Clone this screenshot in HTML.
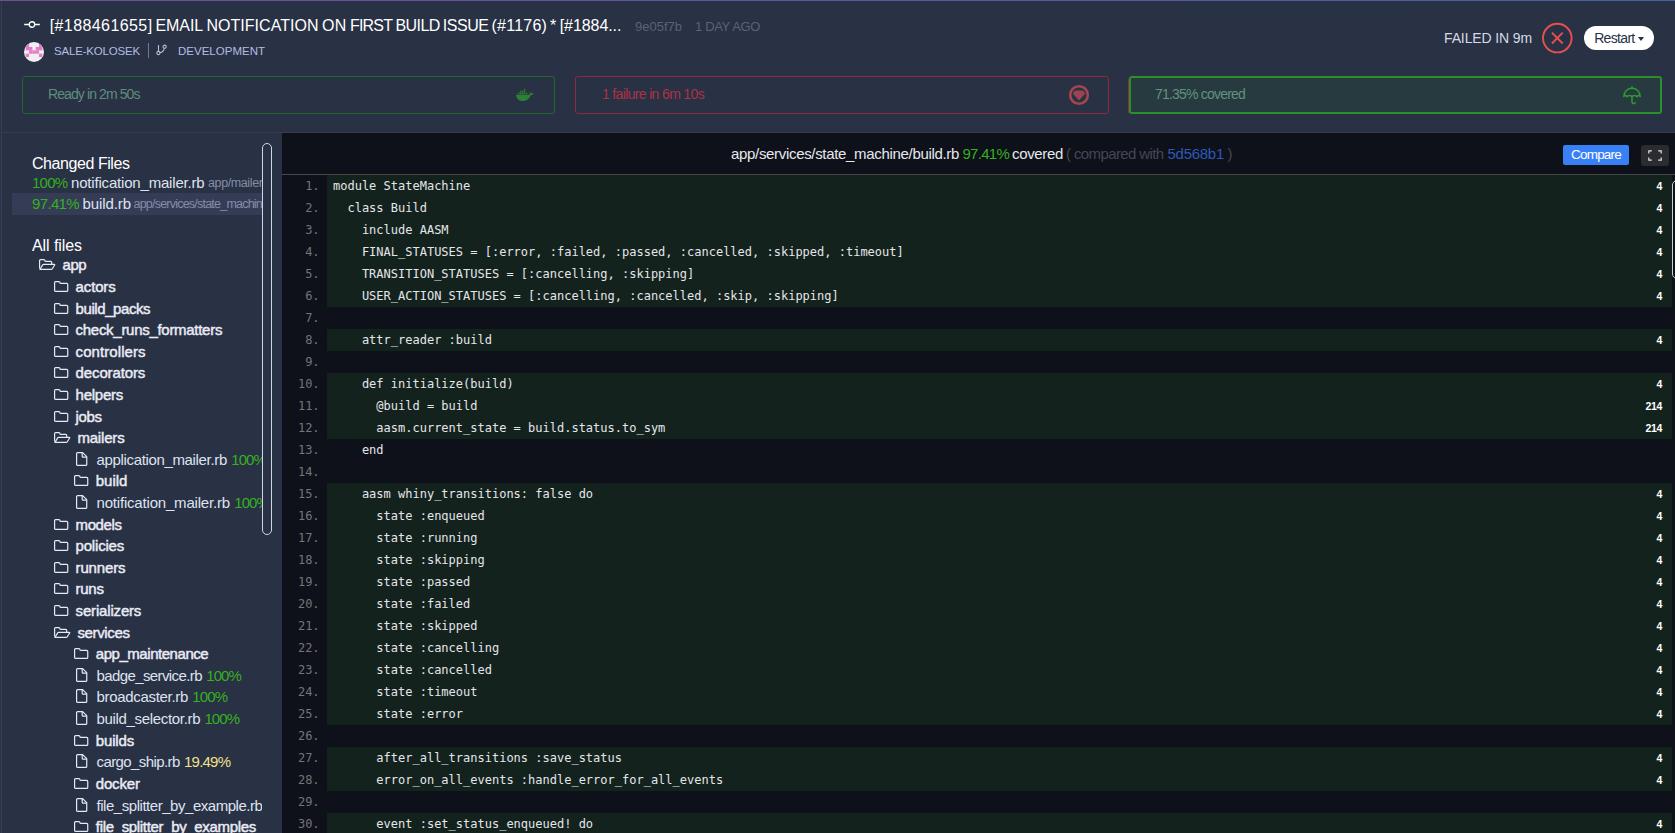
<!DOCTYPE html>
<html lang="en"><head><meta charset="utf-8"><title>Build coverage</title>
<style>
*{box-sizing:border-box;margin:0;padding:0}
html,body{width:1675px;height:833px;overflow:hidden;background:#293144;}
body{position:relative;font-family:"Liberation Sans",sans-serif;color:#fff;font-size:15px;-webkit-font-smoothing:antialiased}
.abs{position:absolute}
.t{position:absolute;white-space:nowrap;line-height:1}
#topline{position:absolute;left:0;top:0;width:1675px;height:1px;background:linear-gradient(to right,#6f4e95,#4a60a5)}
#leftedge{position:absolute;left:0;top:1px;width:2px;height:832px;background:#2c3348;border-right:1px solid #363d53}
#hline{position:absolute;left:2px;top:132px;width:1673px;height:1px;background:#363d53}
svg{display:block;position:absolute;overflow:visible}
.stage{position:absolute;top:76px;height:38px;border:1px solid;border-radius:3px}
.side{position:absolute;left:12px;top:133px;width:250px;height:700px;overflow:hidden}
.row{position:absolute;left:0;height:21px;width:250px;white-space:nowrap;line-height:21px;font-size:15px;color:#dfe3f0}
.row span{position:absolute;top:0}
.dir{font-weight:normal;-webkit-text-stroke:0.45px #e9ecf6;color:#e9ecf6}
.g{color:#35b021}
.y{color:#f0e08a}
.sm{font-size:12.5px;color:#858da7}
.code{position:absolute;left:282px;top:133px;width:1393px;height:700px;background:#0e1119;overflow:hidden}
.ln{position:absolute;left:0;width:1393px;height:22px;font-family:"DejaVu Sans Mono",monospace;font-size:12px;line-height:22px;white-space:pre;color:#e4e6ea}
.ln i{position:absolute;left:0;top:0;width:37.6px;text-align:right;font-style:normal;color:#747577}
.ln b{position:absolute;left:45px;top:0;width:1345px;height:22px;font-weight:normal;padding-left:6px}
.ln.c b{background:#14221e}
.ln u{position:absolute;right:13px;top:0;text-decoration:none;font-family:"Liberation Sans",sans-serif;font-weight:bold;font-size:10.5px;letter-spacing:-0.3px;color:#fff;line-height:22px}
</style></head>
<body>
<div id="topline"></div><div id="leftedge"></div><div id="hline"></div>
<header>
<svg style="left:24px;top:20px" width="16" height="10" viewBox="0 0 16 10"><path d="M0.200 4.500h4.900M10.900 4.500h4.900" stroke="#fff" stroke-width="1.3" fill="none"/><circle cx="8" cy="4.500" r="2.750" stroke="#fff" stroke-width="1.3" fill="none"/></svg>
<h1 class="abs" style="left:0;top:18px;width:640px;height:16px;font-size:16px;font-weight:normal;color:#fff;line-height:1;white-space:nowrap"><span style="letter-spacing:0.410px;position:absolute;top:0;left:49.7px;">[#188461655]</span> <span style="letter-spacing:-0.083px;position:absolute;top:0;left:155.5px;">EMAIL</span> <span style="letter-spacing:0.025px;position:absolute;top:0;left:206.5px;">NOTIFICATION</span> <span style="letter-spacing:0.250px;position:absolute;top:0;left:322.0px;">ON</span> <span style="letter-spacing:-0.804px;position:absolute;top:0;left:350.0px;">FIRST</span> <span style="letter-spacing:-0.565px;position:absolute;top:0;left:395.5px;">BUILD</span> <span style="letter-spacing:-0.463px;position:absolute;top:0;left:442.8px;">ISSUE</span> <span style="letter-spacing:0.233px;position:absolute;top:0;left:491.5px;">(#1176)</span> <span style="letter-spacing:0.866px;position:absolute;top:0;left:550.1px;">*</span> <span style="letter-spacing:-0.065px;position:absolute;top:0;left:559.7px;">[#1884...</span></h1>
<div class="t" style="left:635px;top:19.5px;font-size:13px;color:#59627a"><span style="letter-spacing:0.000px;">9e05f7b</span></div>
<div class="t" style="left:695px;top:19.5px;font-size:13px;color:#59627a"><span style="letter-spacing:-0.352px;">1 DAY AGO</span></div>
<svg style="left:24px;top:42px" width="20" height="20" viewBox="0 0 20 20"><defs><clipPath id="av"><circle cx="10" cy="10" r="10"/></clipPath></defs><g clip-path="url(#av)"><rect width="20" height="20" fill="#f0f0f0"/><g fill="#e37dc9"><rect x="1.67" y="1.67" width="3.4" height="3.4"/><rect x="15.00" y="1.67" width="3.4" height="3.4"/><rect x="1.67" y="5.00" width="3.4" height="3.4"/><rect x="5.00" y="5.00" width="3.4" height="3.4"/><rect x="11.67" y="5.00" width="3.4" height="3.4"/><rect x="15.00" y="5.00" width="3.4" height="3.4"/><rect x="5.00" y="8.33" width="3.4" height="3.4"/><rect x="8.33" y="8.33" width="3.4" height="3.4"/><rect x="11.67" y="8.33" width="3.4" height="3.4"/><rect x="1.67" y="11.67" width="3.4" height="3.4"/><rect x="15.00" y="11.67" width="3.4" height="3.4"/></g></g></svg>
<div class="t" style="left:54px;top:46.2px;font-size:11.5px;color:#b4bce3"><span style="letter-spacing:-0.185px;">SALE-KOLOSEK</span></div>
<div class="abs" style="left:148px;top:43px;width:1px;height:15px;background:#6f7894"></div>
<svg style="left:156px;top:45px" width="10" height="11" viewBox="0 0 10 11"><g stroke="#b4bce3" stroke-width="1.1" fill="none"><circle cx="2.400" cy="8" r="1.600"/><circle cx="8.600" cy="1.700" r="1.600"/><path d="M2.500 0v6.300M8.300 3.300Q7.600 6.900 4 7.600"/></g></svg>
<div class="t" style="left:178px;top:46.2px;font-size:11.5px;color:#b4bce3"><span style="letter-spacing:0.007px;">DEVELOPMENT</span></div>
<div class="t" style="left:1444px;top:31px;font-size:14px;color:#d5d9e6"><span style="letter-spacing:-0.122px;">FAILED IN 9m</span></div>
<svg style="left:1542px;top:23px" width="30" height="30" viewBox="0 0 30 30"><circle cx="15.300" cy="15.100" r="14.300" stroke="#e8504f" stroke-width="1.9" fill="none"/><path d="M9.900 9.700l10.800 10.800M20.700 9.700L9.900 20.500" stroke="#e8504f" stroke-width="1.9" fill="none"/></svg>
<div class="abs" style="left:1584px;top:26px;width:70px;height:24px;border-radius:12px;background:#fff"></div>
<div class="t" style="left:1594.2px;top:30.5px;font-size:14px;color:#293144"><span style="letter-spacing:-0.675px;">Restart</span></div>
<div class="abs" style="left:1638px;top:37px;width:0;height:0;border-left:3.5px solid transparent;border-right:3.5px solid transparent;border-top:4px solid #293144"></div>
</header>
<div class="stage" style="left:22px;width:533px;border-color:#1f6a2c"></div>
<div class="t" style="left:48px;top:87px;font-size:14px;color:#5f8d7c"><span style="letter-spacing:-0.904px;">Ready in 2m 50s</span></div>
<svg style="left:516px;top:89px" width="18" height="12" viewBox="0 0 18 12"><g fill="#2b8233"><path d="M0.100 5.800H12.600C13.500 5.800 14 5.200 14 4.300C14 3.600 13.700 3 13.300 2.500C14.200 2.800 14.700 3.400 14.900 4.200C15.700 3.900 16.600 4 17.300 4.500C16.900 5.500 16 6 14.800 6C13.500 9.900 10.600 12 6.500 12C2.600 12 0.200 9.700 0.100 5.800Z"/><rect x="1.95" y="3.75" width="1.55" height="1.5"/><rect x="3.89" y="3.75" width="1.55" height="1.5"/><rect x="5.83" y="3.75" width="1.55" height="1.5"/><rect x="7.77" y="3.75" width="1.55" height="1.5"/><rect x="9.71" y="3.75" width="1.55" height="1.5"/><rect x="3.89" y="1.80" width="1.55" height="1.5"/><rect x="5.83" y="1.80" width="1.55" height="1.5"/><rect x="7.77" y="1.80" width="1.55" height="1.5"/><rect x="7.77" y="-0.15" width="1.55" height="1.5"/></g></svg>
<div class="stage" style="left:575px;width:534px;border-color:#8f2a3a"></div>
<div class="t" style="left:602px;top:87px;font-size:14px;color:#ad3146"><span style="letter-spacing:-0.653px;">1 failure in 6m 10s</span></div>
<svg style="left:1069px;top:85px" width="20" height="20" viewBox="0 0 20 20"><circle cx="10" cy="10" r="8.8" stroke="#a5464e" stroke-width="2.6" fill="none"/><path d="M6.200 5.400h7.600l2.500 3.100L10 15.400L3.700 8.500z" fill="#9a444f"/></svg>
<div class="abs" style="left:1128px;top:79px;width:1px;height:34px;background:#8f2a3a"></div>
<div class="stage" style="left:1129px;width:533px;border-width:2px;border-color:#2b8f2b;background:#263a3f"></div>
<div class="t" style="left:1155px;top:87px;font-size:14px;color:#62917f"><span style="letter-spacing:-0.799px;">71.35% covered</span></div>
<svg style="left:1623px;top:86px" width="18" height="19" viewBox="0 0 18 19"><g stroke="#2c9a33" stroke-width="1.5" fill="none" stroke-linejoin="round"><path d="M9 0.2v2"/><path d="M0.8 10.5C1 5.5 4.500 2.200 9 2.200S17 5.500 17.200 10.500c-1-1.300-2.300-1.300-3.200 0.300c-1-1.700-3.200-1.700-5 0c-1.800-1.700-4-1.700-5 0c-0.900-1.600-2.200-1.600-3.200-0.300z"/><path d="M9 9.500v6.600c0 2.300 3.200 2.300 3.200 0"/></g></svg>
<aside class="side">
<div class="abs" style="left:0;top:60px;width:250px;height:22px;background:#353c56"></div>
<h2 class="t" style="left:20px;top:22.5px;font-size:16px;font-weight:normal;color:#fff"><span style="letter-spacing:-0.436px;">Changed Files</span></h2>
<div class="row" style="top:39px"><span class="g" style="letter-spacing:-0.719px;left:20.0px;">100%</span><span style="letter-spacing:-0.185px;left:59.0px;">notification_mailer.rb</span><span class="sm" style="letter-spacing:-0.388px;left:196px;top:1px">app/mailers/notification_mailer.rb</span></div>
<div class="row" style="top:60px"><span class="g" style="letter-spacing:-0.646px;left:20.0px;">97.41%</span><span style="letter-spacing:-0.088px;left:70.5px;">build.rb</span><span class="sm" style="letter-spacing:-0.780px;left:121.5px;top:1px">app/services/state_machine/build.rb</span></div>
<h2 class="t" style="left:20px;top:104.5px;font-size:16px;font-weight:normal;color:#fff"><span style="letter-spacing:-0.076px;">All files</span></h2>
<div class="row" style="top:121px"><svg style="left:26.90px;top:5px" width="17" height="11" viewBox="0 0 17 11"><g stroke="#e6eaf8" stroke-width="1.2" fill="none" stroke-linejoin="round"><path d="M0.600 9.600V1.550Q0.600 0.550 1.600 0.550H4.900Q5.900 0.550 5.900 1.500Q5.900 2.450 6.900 2.450H11.700Q12.700 2.450 12.700 3.450V5.300"/><path d="M0.900 10.450L3.700 5.900Q4 5.400 4.600 5.400H15.300Q16 5.400 15.650 6L13.150 9.950Q12.850 10.450 12.200 10.450Z"/></g></svg><span class="dir" style="letter-spacing:-0.444px;left:50.5px;">app</span></div>
<div class="row" style="top:143px"><svg style="left:41.80px;top:5px" width="15" height="11" viewBox="0 0 15 11"><path d="M0.600 1.550Q0.600 0.550 1.600 0.550H4.900Q5.900 0.550 5.900 1.500Q5.900 2.450 6.900 2.450H12.750Q13.750 2.450 13.750 3.450V9.450Q13.750 10.450 12.750 10.450H1.600Q0.600 10.450 0.600 9.450Z" stroke="#e6eaf8" stroke-width="1.2" fill="none"/></svg><span class="dir" style="letter-spacing:-0.143px;left:63.6px;">actors</span></div>
<div class="row" style="top:165px"><svg style="left:41.80px;top:5px" width="15" height="11" viewBox="0 0 15 11"><path d="M0.600 1.550Q0.600 0.550 1.600 0.550H4.900Q5.900 0.550 5.900 1.500Q5.900 2.450 6.900 2.450H12.750Q13.750 2.450 13.750 3.450V9.450Q13.750 10.450 12.750 10.450H1.600Q0.600 10.450 0.600 9.450Z" stroke="#e6eaf8" stroke-width="1.2" fill="none"/></svg><span class="dir" style="letter-spacing:-0.420px;left:63.6px;">build_packs</span></div>
<div class="row" style="top:186px"><svg style="left:41.80px;top:5px" width="15" height="11" viewBox="0 0 15 11"><path d="M0.600 1.550Q0.600 0.550 1.600 0.550H4.900Q5.900 0.550 5.900 1.500Q5.900 2.450 6.900 2.450H12.750Q13.750 2.450 13.750 3.450V9.450Q13.750 10.450 12.750 10.450H1.600Q0.600 10.450 0.600 9.450Z" stroke="#e6eaf8" stroke-width="1.2" fill="none"/></svg><span class="dir" style="letter-spacing:-0.289px;left:63.6px;">check_runs_formatters</span></div>
<div class="row" style="top:208px"><svg style="left:41.80px;top:5px" width="15" height="11" viewBox="0 0 15 11"><path d="M0.600 1.550Q0.600 0.550 1.600 0.550H4.900Q5.900 0.550 5.900 1.500Q5.900 2.450 6.900 2.450H12.750Q13.750 2.450 13.750 3.450V9.450Q13.750 10.450 12.750 10.450H1.600Q0.600 10.450 0.600 9.450Z" stroke="#e6eaf8" stroke-width="1.2" fill="none"/></svg><span class="dir" style="letter-spacing:0.082px;left:63.6px;">controllers</span></div>
<div class="row" style="top:229px"><svg style="left:41.80px;top:5px" width="15" height="11" viewBox="0 0 15 11"><path d="M0.600 1.550Q0.600 0.550 1.600 0.550H4.900Q5.900 0.550 5.900 1.500Q5.900 2.450 6.900 2.450H12.750Q13.750 2.450 13.750 3.450V9.450Q13.750 10.450 12.750 10.450H1.600Q0.600 10.450 0.600 9.450Z" stroke="#e6eaf8" stroke-width="1.2" fill="none"/></svg><span class="dir" style="letter-spacing:-0.128px;left:63.6px;">decorators</span></div>
<div class="row" style="top:251px"><svg style="left:41.80px;top:5px" width="15" height="11" viewBox="0 0 15 11"><path d="M0.600 1.550Q0.600 0.550 1.600 0.550H4.900Q5.900 0.550 5.900 1.500Q5.900 2.450 6.900 2.450H12.750Q13.750 2.450 13.750 3.450V9.450Q13.750 10.450 12.750 10.450H1.600Q0.600 10.450 0.600 9.450Z" stroke="#e6eaf8" stroke-width="1.2" fill="none"/></svg><span class="dir" style="letter-spacing:-0.258px;left:63.6px;">helpers</span></div>
<div class="row" style="top:273px"><svg style="left:41.80px;top:5px" width="15" height="11" viewBox="0 0 15 11"><path d="M0.600 1.550Q0.600 0.550 1.600 0.550H4.900Q5.900 0.550 5.900 1.500Q5.900 2.450 6.900 2.450H12.750Q13.750 2.450 13.750 3.450V9.450Q13.750 10.450 12.750 10.450H1.600Q0.600 10.450 0.600 9.450Z" stroke="#e6eaf8" stroke-width="1.2" fill="none"/></svg><span class="dir" style="letter-spacing:-0.333px;left:63.6px;">jobs</span></div>
<div class="row" style="top:294px"><svg style="left:41.90px;top:5px" width="17" height="11" viewBox="0 0 17 11"><g stroke="#e6eaf8" stroke-width="1.2" fill="none" stroke-linejoin="round"><path d="M0.600 9.600V1.550Q0.600 0.550 1.600 0.550H4.900Q5.900 0.550 5.900 1.500Q5.900 2.450 6.900 2.450H11.700Q12.700 2.450 12.700 3.450V5.300"/><path d="M0.900 10.450L3.700 5.900Q4 5.400 4.600 5.400H15.300Q16 5.400 15.650 6L13.150 9.950Q12.850 10.450 12.200 10.450Z"/></g></svg><span class="dir" style="letter-spacing:-0.178px;left:65.4px;">mailers</span></div>
<div class="row" style="top:316px"><svg style="left:63.70px;top:3px" width="12" height="14" viewBox="0 0 12 14"><g stroke="#e6eaf8" stroke-width="1.2" fill="none" stroke-linejoin="round"><path d="M0.600 1.550Q0.600 0.550 1.600 0.550H6.600L10.750 4.700V12.450Q10.750 13.450 9.750 13.450H1.600Q0.600 13.450 0.600 12.450Z"/><path d="M6.200 0.800V4.200Q6.200 5.150 7.100 5.150H10.600"/></g></svg><span style="letter-spacing:-0.342px;left:84.5px;">application_mailer.rb</span><span class="g" style="letter-spacing:-0.894px;left:219.2px;">100%</span></div>
<div class="row" style="top:337px"><svg style="left:61.75px;top:5px" width="15" height="11" viewBox="0 0 15 11"><path d="M0.600 1.550Q0.600 0.550 1.600 0.550H4.900Q5.900 0.550 5.900 1.500Q5.900 2.450 6.900 2.450H12.750Q13.750 2.450 13.750 3.450V9.450Q13.750 10.450 12.750 10.450H1.600Q0.600 10.450 0.600 9.450Z" stroke="#e6eaf8" stroke-width="1.2" fill="none"/></svg><span class="dir" style="letter-spacing:-0.041px;left:83.8px;">build</span></div>
<div class="row" style="top:359px"><svg style="left:63.70px;top:3px" width="12" height="14" viewBox="0 0 12 14"><g stroke="#e6eaf8" stroke-width="1.2" fill="none" stroke-linejoin="round"><path d="M0.600 1.550Q0.600 0.550 1.600 0.550H6.600L10.750 4.700V12.450Q10.750 13.450 9.750 13.450H1.600Q0.600 13.450 0.600 12.450Z"/><path d="M6.200 0.800V4.200Q6.200 5.150 7.100 5.150H10.600"/></g></svg><span style="letter-spacing:-0.190px;left:84.5px;">notification_mailer.rb</span><span class="g" style="letter-spacing:-0.894px;left:222.2px;">100%</span></div>
<div class="row" style="top:381px"><svg style="left:41.80px;top:5px" width="15" height="11" viewBox="0 0 15 11"><path d="M0.600 1.550Q0.600 0.550 1.600 0.550H4.900Q5.900 0.550 5.900 1.500Q5.900 2.450 6.900 2.450H12.750Q13.750 2.450 13.750 3.450V9.450Q13.750 10.450 12.750 10.450H1.600Q0.600 10.450 0.600 9.450Z" stroke="#e6eaf8" stroke-width="1.2" fill="none"/></svg><span class="dir" style="letter-spacing:-0.410px;left:63.6px;">models</span></div>
<div class="row" style="top:402px"><svg style="left:41.80px;top:5px" width="15" height="11" viewBox="0 0 15 11"><path d="M0.600 1.550Q0.600 0.550 1.600 0.550H4.900Q5.900 0.550 5.900 1.500Q5.900 2.450 6.900 2.450H12.750Q13.750 2.450 13.750 3.450V9.450Q13.750 10.450 12.750 10.450H1.600Q0.600 10.450 0.600 9.450Z" stroke="#e6eaf8" stroke-width="1.2" fill="none"/></svg><span class="dir" style="letter-spacing:-0.204px;left:63.6px;">policies</span></div>
<div class="row" style="top:424px"><svg style="left:41.80px;top:5px" width="15" height="11" viewBox="0 0 15 11"><path d="M0.600 1.550Q0.600 0.550 1.600 0.550H4.900Q5.900 0.550 5.900 1.500Q5.900 2.450 6.900 2.450H12.750Q13.750 2.450 13.750 3.450V9.450Q13.750 10.450 12.750 10.450H1.600Q0.600 10.450 0.600 9.450Z" stroke="#e6eaf8" stroke-width="1.2" fill="none"/></svg><span class="dir" style="letter-spacing:-0.166px;left:63.6px;">runners</span></div>
<div class="row" style="top:445px"><svg style="left:41.80px;top:5px" width="15" height="11" viewBox="0 0 15 11"><path d="M0.600 1.550Q0.600 0.550 1.600 0.550H4.900Q5.900 0.550 5.900 1.500Q5.900 2.450 6.900 2.450H12.750Q13.750 2.450 13.750 3.450V9.450Q13.750 10.450 12.750 10.450H1.600Q0.600 10.450 0.600 9.450Z" stroke="#e6eaf8" stroke-width="1.2" fill="none"/></svg><span class="dir" style="letter-spacing:-0.297px;left:63.6px;">runs</span></div>
<div class="row" style="top:467px"><svg style="left:41.80px;top:5px" width="15" height="11" viewBox="0 0 15 11"><path d="M0.600 1.550Q0.600 0.550 1.600 0.550H4.900Q5.900 0.550 5.900 1.500Q5.900 2.450 6.900 2.450H12.750Q13.750 2.450 13.750 3.450V9.450Q13.750 10.450 12.750 10.450H1.600Q0.600 10.450 0.600 9.450Z" stroke="#e6eaf8" stroke-width="1.2" fill="none"/></svg><span class="dir" style="letter-spacing:-0.174px;left:63.6px;">serializers</span></div>
<div class="row" style="top:489px"><svg style="left:41.90px;top:5px" width="17" height="11" viewBox="0 0 17 11"><g stroke="#e6eaf8" stroke-width="1.2" fill="none" stroke-linejoin="round"><path d="M0.600 9.600V1.550Q0.600 0.550 1.600 0.550H4.900Q5.900 0.550 5.900 1.500Q5.900 2.450 6.900 2.450H11.700Q12.700 2.450 12.700 3.450V5.300"/><path d="M0.900 10.450L3.700 5.900Q4 5.400 4.600 5.400H15.300Q16 5.400 15.650 6L13.150 9.950Q12.850 10.450 12.200 10.450Z"/></g></svg><span class="dir" style="letter-spacing:-0.352px;left:65.4px;">services</span></div>
<div class="row" style="top:510px"><svg style="left:61.75px;top:5px" width="15" height="11" viewBox="0 0 15 11"><path d="M0.600 1.550Q0.600 0.550 1.600 0.550H4.900Q5.900 0.550 5.900 1.500Q5.900 2.450 6.900 2.450H12.750Q13.750 2.450 13.750 3.450V9.450Q13.750 10.450 12.750 10.450H1.600Q0.600 10.450 0.600 9.450Z" stroke="#e6eaf8" stroke-width="1.2" fill="none"/></svg><span class="dir" style="letter-spacing:-0.458px;left:83.8px;">app_maintenance</span></div>
<div class="row" style="top:532px"><svg style="left:63.70px;top:3px" width="12" height="14" viewBox="0 0 12 14"><g stroke="#e6eaf8" stroke-width="1.2" fill="none" stroke-linejoin="round"><path d="M0.600 1.550Q0.600 0.550 1.600 0.550H6.600L10.750 4.700V12.450Q10.750 13.450 9.750 13.450H1.600Q0.600 13.450 0.600 12.450Z"/><path d="M6.200 0.800V4.200Q6.200 5.150 7.100 5.150H10.600"/></g></svg><span style="letter-spacing:-0.605px;left:84.5px;">badge_service.rb</span><span class="g" style="letter-spacing:-0.894px;left:194.2px;">100%</span></div>
<div class="row" style="top:553px"><svg style="left:63.70px;top:3px" width="12" height="14" viewBox="0 0 12 14"><g stroke="#e6eaf8" stroke-width="1.2" fill="none" stroke-linejoin="round"><path d="M0.600 1.550Q0.600 0.550 1.600 0.550H6.600L10.750 4.700V12.450Q10.750 13.450 9.750 13.450H1.600Q0.600 13.450 0.600 12.450Z"/><path d="M6.200 0.800V4.200Q6.200 5.150 7.100 5.150H10.600"/></g></svg><span style="letter-spacing:-0.314px;left:84.5px;">broadcaster.rb</span><span class="g" style="letter-spacing:-0.894px;left:180.3px;">100%</span></div>
<div class="row" style="top:575px"><svg style="left:63.70px;top:3px" width="12" height="14" viewBox="0 0 12 14"><g stroke="#e6eaf8" stroke-width="1.2" fill="none" stroke-linejoin="round"><path d="M0.600 1.550Q0.600 0.550 1.600 0.550H6.600L10.750 4.700V12.450Q10.750 13.450 9.750 13.450H1.600Q0.600 13.450 0.600 12.450Z"/><path d="M6.200 0.800V4.200Q6.200 5.150 7.100 5.150H10.600"/></g></svg><span style="letter-spacing:-0.326px;left:84.5px;">build_selector.rb</span><span class="g" style="letter-spacing:-0.894px;left:192.4px;">100%</span></div>
<div class="row" style="top:597px"><svg style="left:61.75px;top:5px" width="15" height="11" viewBox="0 0 15 11"><path d="M0.600 1.550Q0.600 0.550 1.600 0.550H4.900Q5.900 0.550 5.900 1.500Q5.900 2.450 6.900 2.450H12.750Q13.750 2.450 13.750 3.450V9.450Q13.750 10.450 12.750 10.450H1.600Q0.600 10.450 0.600 9.450Z" stroke="#e6eaf8" stroke-width="1.2" fill="none"/></svg><span class="dir" style="letter-spacing:-0.151px;left:83.8px;">builds</span></div>
<div class="row" style="top:618px"><svg style="left:63.70px;top:3px" width="12" height="14" viewBox="0 0 12 14"><g stroke="#e6eaf8" stroke-width="1.2" fill="none" stroke-linejoin="round"><path d="M0.600 1.550Q0.600 0.550 1.600 0.550H6.600L10.750 4.700V12.450Q10.750 13.450 9.750 13.450H1.600Q0.600 13.450 0.600 12.450Z"/><path d="M6.200 0.800V4.200Q6.200 5.150 7.100 5.150H10.600"/></g></svg><span style="letter-spacing:-0.592px;left:84.5px;">cargo_ship.rb</span><span class="y" style="letter-spacing:-0.779px;left:172.0px;">19.49%</span></div>
<div class="row" style="top:640px"><svg style="left:61.75px;top:5px" width="15" height="11" viewBox="0 0 15 11"><path d="M0.600 1.550Q0.600 0.550 1.600 0.550H4.900Q5.900 0.550 5.900 1.500Q5.900 2.450 6.900 2.450H12.750Q13.750 2.450 13.750 3.450V9.450Q13.750 10.450 12.750 10.450H1.600Q0.600 10.450 0.600 9.450Z" stroke="#e6eaf8" stroke-width="1.2" fill="none"/></svg><span class="dir" style="letter-spacing:-0.189px;left:83.8px;">docker</span></div>
<div class="row" style="top:662px"><svg style="left:63.70px;top:3px" width="12" height="14" viewBox="0 0 12 14"><g stroke="#e6eaf8" stroke-width="1.2" fill="none" stroke-linejoin="round"><path d="M0.600 1.550Q0.600 0.550 1.600 0.550H6.600L10.750 4.700V12.450Q10.750 13.450 9.750 13.450H1.600Q0.600 13.450 0.600 12.450Z"/><path d="M6.200 0.800V4.200Q6.200 5.150 7.100 5.150H10.600"/></g></svg><span style="letter-spacing:-0.461px;left:84.5px;">file_splitter_by_example.rb</span></div>
<div class="row" style="top:683px"><svg style="left:61.75px;top:5px" width="15" height="11" viewBox="0 0 15 11"><path d="M0.600 1.550Q0.600 0.550 1.600 0.550H4.900Q5.900 0.550 5.900 1.500Q5.900 2.450 6.900 2.450H12.750Q13.750 2.450 13.750 3.450V9.450Q13.750 10.450 12.750 10.450H1.600Q0.600 10.450 0.600 9.450Z" stroke="#e6eaf8" stroke-width="1.2" fill="none"/></svg><span class="dir" style="letter-spacing:-0.333px;left:83.8px;">file_splitter_by_examples</span></div>
</aside>
<div class="abs" style="left:262px;top:143px;width:10px;height:392px;border:1px solid #d2d5e4;border-radius:5px"></div>
<main class="code">
<div class="abs" style="left:0;top:0;width:1393px;height:42px;border-bottom:1px solid #474747"></div>
<div class="t" style="left:449px;top:12.5px;font-size:15px;color:#e6e8ee"><span style="letter-spacing:-0.323px;">app/services/state_machine/build.rb</span></div>
<div class="t" style="left:680.5px;top:12.5px;font-size:15px;color:#35b021"><span style="letter-spacing:-0.729px;">97.41%</span></div>
<div class="t" style="left:730px;top:12.5px;font-size:15px;color:#e6e8ee"><span style="letter-spacing:-0.339px;">covered</span></div>
<div class="t" style="left:784px;top:12.5px;font-size:15px;color:#424757"><span style="letter-spacing:-0.615px;">( compared with</span></div>
<div class="t" style="left:885.5px;top:12.5px;font-size:15px;color:#2c59b5"><span style="letter-spacing:-0.272px;">5d568b1</span></div>
<div class="t" style="left:945.5px;top:12.5px;font-size:15px;color:#424757">)</div>
<div class="abs" style="left:1281px;top:12px;width:66px;height:20px;border-radius:2px;background:#3880f5"></div>
<div class="t" style="left:1289px;top:15px;font-size:13.5px;color:#fff"><span style="letter-spacing:-0.790px;">Compare</span></div>
<div class="abs" style="left:1359px;top:12px;width:28px;height:21px;border-radius:3px;background:#2a2c30"></div>
<svg style="left:1366px;top:17px" width="14" height="11" viewBox="0 0 14 11"><path d="M0.800 3.600V0.800h3M10.200 0.800h3v2.800M13.200 7.400v2.800h-3M3.800 10.200h-3V7.400" stroke="#e4e4e4" stroke-width="1.2" fill="none"/></svg>
<div class="ln c" style="top:42px"><i>1.</i><b>module StateMachine</b><u>4</u></div>
<div class="ln c" style="top:64px"><i>2.</i><b>  class Build</b><u>4</u></div>
<div class="ln c" style="top:86px"><i>3.</i><b>    include AASM</b><u>4</u></div>
<div class="ln c" style="top:108px"><i>4.</i><b>    FINAL_STATUSES = [:error, :failed, :passed, :cancelled, :skipped, :timeout]</b><u>4</u></div>
<div class="ln c" style="top:130px"><i>5.</i><b>    TRANSITION_STATUSES = [:cancelling, :skipping]</b><u>4</u></div>
<div class="ln c" style="top:152px"><i>6.</i><b>    USER_ACTION_STATUSES = [:cancelling, :cancelled, :skip, :skipping]</b><u>4</u></div>
<div class="ln" style="top:174px"><i>7.</i><b></b></div>
<div class="ln c" style="top:196px"><i>8.</i><b>    attr_reader :build</b><u>4</u></div>
<div class="ln" style="top:218px"><i>9.</i><b></b></div>
<div class="ln c" style="top:240px"><i>10.</i><b>    def initialize(build)</b><u>4</u></div>
<div class="ln c" style="top:262px"><i>11.</i><b>      @build = build</b><u>214</u></div>
<div class="ln c" style="top:284px"><i>12.</i><b>      aasm.current_state = build.status.to_sym</b><u>214</u></div>
<div class="ln" style="top:306px"><i>13.</i><b>    end</b></div>
<div class="ln" style="top:328px"><i>14.</i><b></b></div>
<div class="ln c" style="top:350px"><i>15.</i><b>    aasm whiny_transitions: false do</b><u>4</u></div>
<div class="ln c" style="top:372px"><i>16.</i><b>      state :enqueued</b><u>4</u></div>
<div class="ln c" style="top:394px"><i>17.</i><b>      state :running</b><u>4</u></div>
<div class="ln c" style="top:416px"><i>18.</i><b>      state :skipping</b><u>4</u></div>
<div class="ln c" style="top:438px"><i>19.</i><b>      state :passed</b><u>4</u></div>
<div class="ln c" style="top:460px"><i>20.</i><b>      state :failed</b><u>4</u></div>
<div class="ln c" style="top:482px"><i>21.</i><b>      state :skipped</b><u>4</u></div>
<div class="ln c" style="top:504px"><i>22.</i><b>      state :cancelling</b><u>4</u></div>
<div class="ln c" style="top:526px"><i>23.</i><b>      state :cancelled</b><u>4</u></div>
<div class="ln c" style="top:548px"><i>24.</i><b>      state :timeout</b><u>4</u></div>
<div class="ln c" style="top:570px"><i>25.</i><b>      state :error</b><u>4</u></div>
<div class="ln" style="top:592px"><i>26.</i><b></b></div>
<div class="ln c" style="top:614px"><i>27.</i><b>      after_all_transitions :save_status</b><u>4</u></div>
<div class="ln c" style="top:636px"><i>28.</i><b>      error_on_all_events :handle_error_for_all_events</b><u>4</u></div>
<div class="ln" style="top:658px"><i>29.</i><b></b></div>
<div class="ln c" style="top:680px"><i>30.</i><b>      event :set_status_enqueued! do</b><u>4</u></div>
<div class="abs" style="left:1390px;top:47px;width:10px;height:99px;border:1px solid #c9ccd6;border-radius:5px"></div>
</main>
</body></html>
